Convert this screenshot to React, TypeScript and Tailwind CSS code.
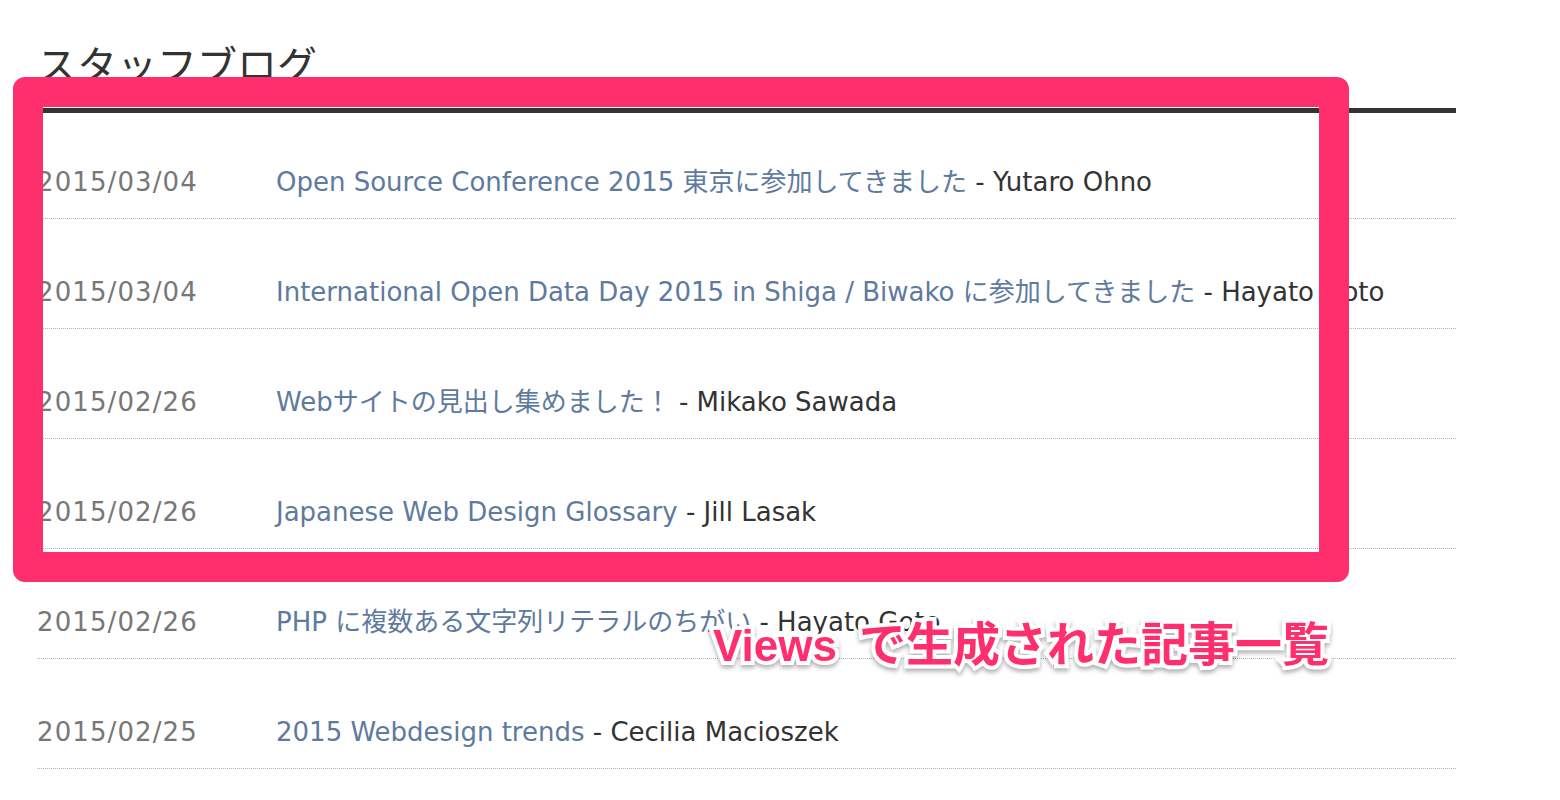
import React from 'react';

interface Post {
  date: string;
  title: string;
  author: string;
}

const POSTS: Post[] = [
  { date: '2015/03/04', title: 'Open Source Conference 2015 東京に参加してきました', author: 'Yutaro Ohno' },
  { date: '2015/03/04', title: 'International Open Data Day 2015 in Shiga / Biwako に参加してきました', author: 'Hayato Goto' },
  { date: '2015/02/26', title: 'Webサイトの見出し集めました！', author: 'Mikako Sawada' },
  { date: '2015/02/26', title: 'Japanese Web Design Glossary', author: 'Jill Lasak' },
  { date: '2015/02/26', title: 'PHP に複数ある文字列リテラルのちがい', author: 'Hayato Goto' },
  { date: '2015/02/25', title: '2015 Webdesign trends', author: 'Cecilia Macioszek' },
];

const App: React.FC = () => {
  return (
    <div className="relative min-h-screen overflow-hidden bg-white font-['DejaVu_Sans','Noto_Sans_CJK_JP',sans-serif] text-[#333]">
      <div className="ml-[37px] w-[1419px] pt-[43px]">
        {/* Section heading */}
        <h2 className="border-b-[5px] border-[#333] pb-[25px] font-['Noto_Sans_CJK_JP',sans-serif] text-[40px] leading-[40px] font-normal">
          スタッフブログ
        </h2>

        {/* Post list */}
        <ul>
          {POSTS.map((post, index) => (
            <li
              key={index}
              className="flex border-b border-dotted border-[#b3b3b3] pt-[55px] pb-[18px] text-[26px] leading-[36px] whitespace-nowrap first:pt-[51px]"
            >
              <span className="w-[239px] shrink-0 tracking-[1.1px] text-[#777]">{post.date}</span>
              <span>
                <a href="#" className="text-[#5e7a9e]">{post.title}</a>
                <span className="text-[#333]"> - {post.author}</span>
              </span>
            </li>
          ))}
        </ul>
      </div>

      {/* Annotation frame */}
      <div className="pointer-events-none absolute left-[13px] top-[77px] h-[505px] w-[1336px] rounded-[12px] border-[30px] border-[#ff2e6c]" />

      {/* Annotation label */}
      <div className="pointer-events-none absolute left-[713px] top-[617px] flex items-baseline whitespace-nowrap font-bold text-[#ff2e6c] [-webkit-text-stroke:8px_white] [paint-order:stroke_fill] [filter:drop-shadow(0_3px_2px_rgba(0,0,0,0.3))]">
        <span className="font-['Liberation_Sans',sans-serif] text-[44px] leading-[44px]">Views</span>
        <span className="ml-[22px] font-['Noto_Sans_CJK_JP',sans-serif] text-[47px] leading-[47px]">で生成された記事一覧</span>
      </div>
    </div>
  );
};

export default App;
